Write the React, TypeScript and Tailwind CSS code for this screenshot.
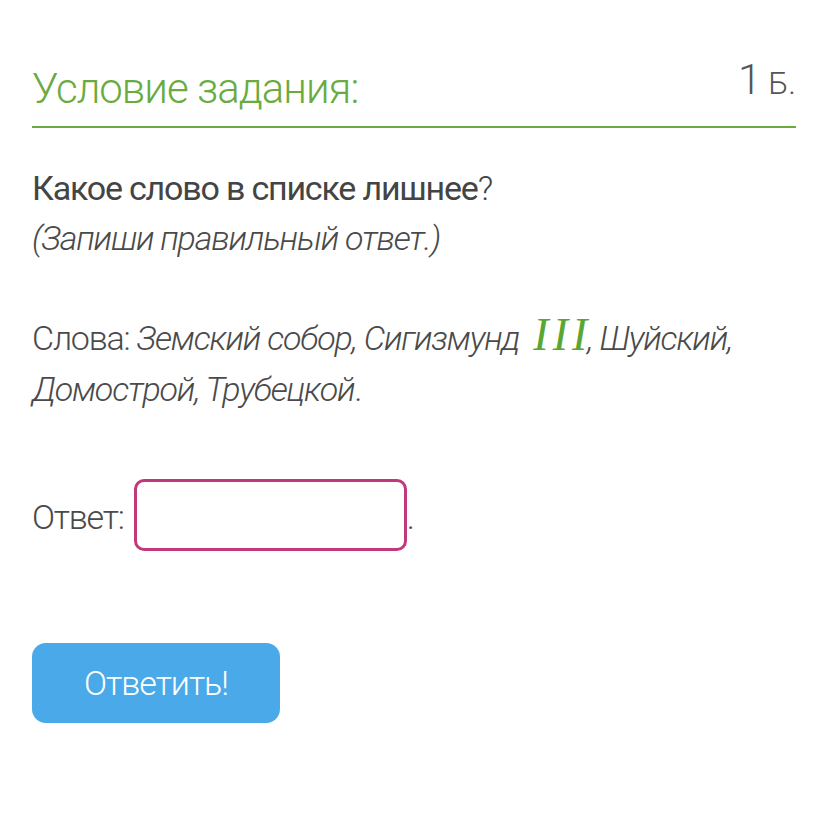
export default function App() {
    return (
        <div
            className="min-h-[828px] bg-white px-8 pt-[55px] text-[#4a4a4a]"
            style={{ fontFamily: 'Roboto, "Liberation Sans", sans-serif' }}
        >
            {/* Header */}
            <div className="flex items-end justify-between border-b-2 border-[#6aab3f] pb-[12px]">
                <h1 className="text-[42px] font-light leading-[50px] tracking-[-1px] text-[#6aab3f]">
                    Условие задания:
                </h1>
                <div className="font-light leading-[50px] text-[#555]">
                    <span className="text-[42px] tracking-[-1px]">1</span>
                    <span className="ml-2 text-[32px]">Б.</span>
                </div>
            </div>

            {/* Question */}
            <div className="mt-[35px] text-[34px] leading-[50px] tracking-[-1.2px]">
                <p className="text-[#444]">
                    <span className="font-normal">Какое слово в списке лишнее</span>
                    <span className="font-light">?</span>
                </p>
                <p className="font-light italic">(Запиши правильный ответ.)</p>
            </div>

            <p className="mt-[46px] text-[34px] font-light leading-[51px] tracking-[-1.2px]">
                Слова: <i>Земский собор, Сигизмунд</i>
                <span
                    className="ml-[14px] mr-[-4px] text-[46px] font-normal italic tracking-[4px] text-[#5aa632]"
                    style={{ fontFamily: '"Liberation Serif", serif' }}
                >
                    III
                </span>
                <i>, Шуйский, Домострой, Трубецкой</i>.
            </p>

            {/* Answer */}
            <div className="mt-[64px] flex items-end text-[34px] font-light tracking-[-1.2px]">
                <span className="mb-[14px] leading-[40px]">Ответ:</span>
                <input
                    type="text"
                    className="ml-[10px] h-[72px] w-[273px] rounded-[10px] border-[3px] border-[#c2397b] bg-white outline-none"
                />
                <span className="mb-[14px] leading-[40px]">.</span>
            </div>

            <button className="mt-[92px] h-[80px] w-[248px] rounded-[14px] bg-[#4aa9e8] text-[34px] font-light tracking-[-1px] text-white">
                Ответить!
            </button>
        </div>
    );
}
